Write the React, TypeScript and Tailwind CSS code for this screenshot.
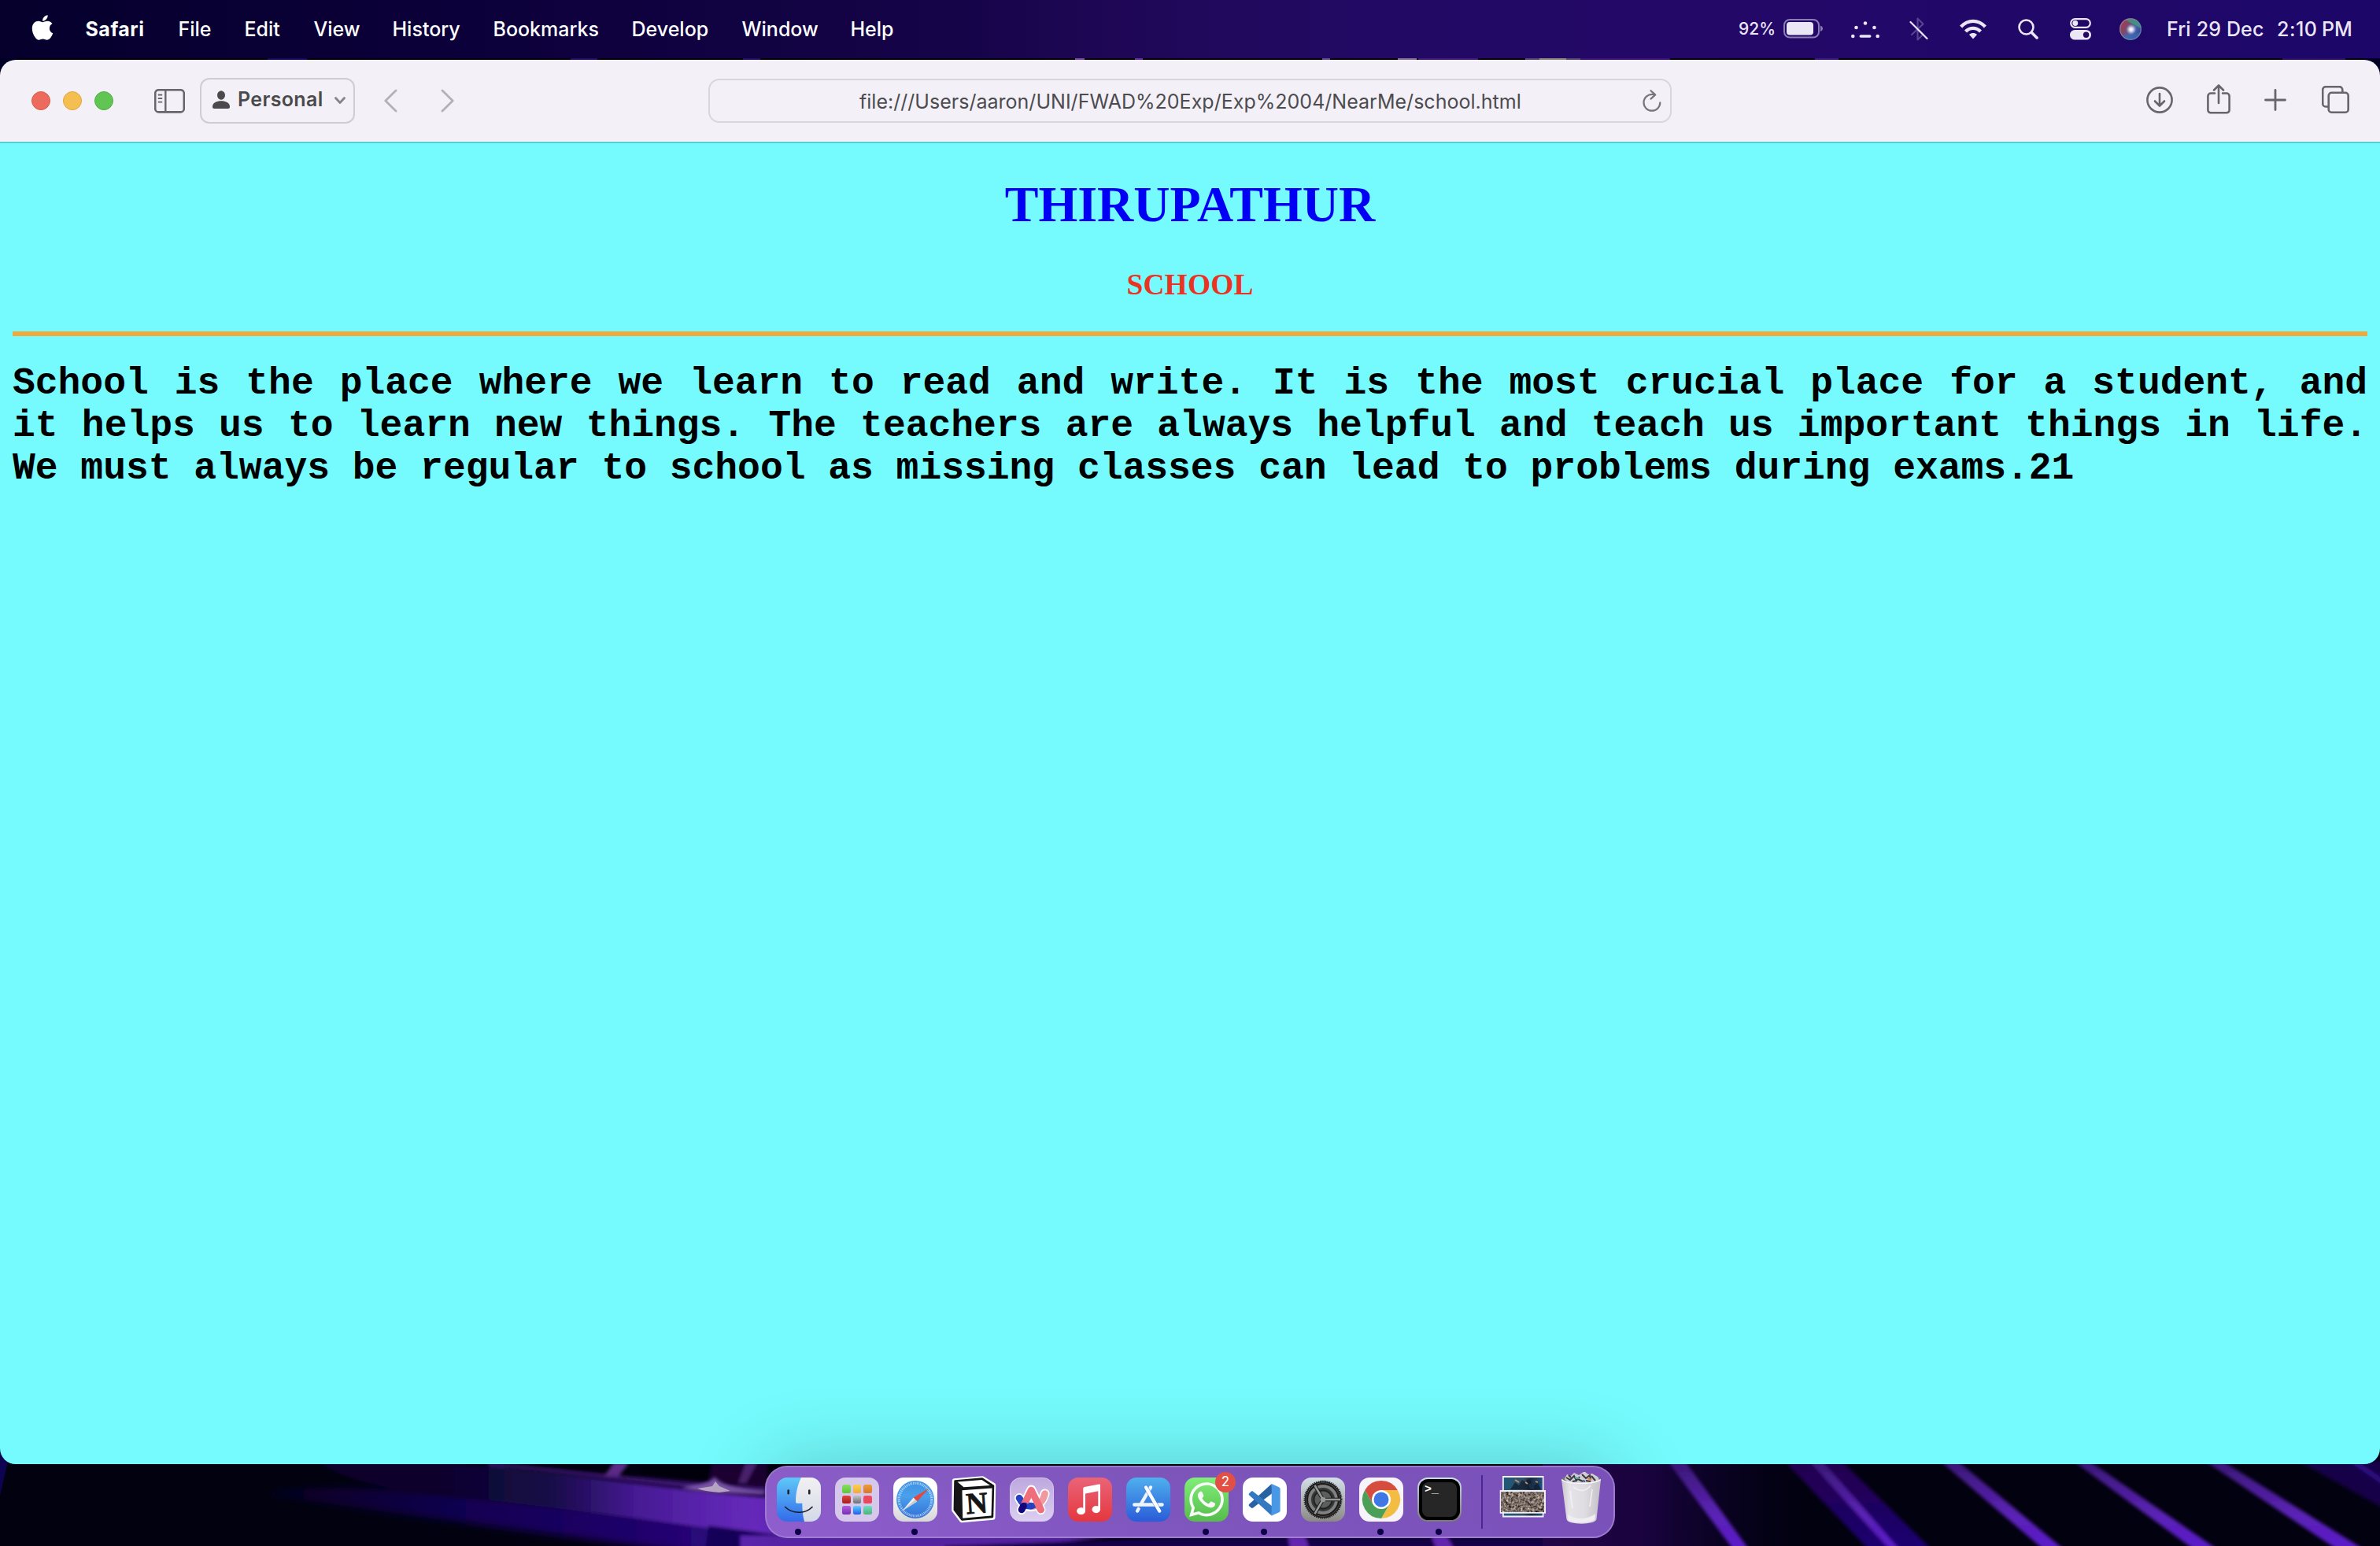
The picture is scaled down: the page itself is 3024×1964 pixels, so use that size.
import React from "react";
import { FaApple, FaWhatsapp } from "react-icons/fa";

function Wallpaper() {
  return (
    <svg className="absolute inset-0" width="3024" height="1964" viewBox="0 0 3024 1964">
      <defs>
        <linearGradient id="wBeam" x1="560" x2="960" y1="0" y2="0" gradientUnits="userSpaceOnUse">
          <stop offset="0" stopColor="#0a042c" />
          <stop offset="0.35" stopColor="#170a48" />
          <stop offset="0.62" stopColor="#451a92" />
          <stop offset="1" stopColor="#6b2cc4" />
        </linearGradient>
        <linearGradient id="wLow" x1="320" x2="980" y1="0" y2="0" gradientUnits="userSpaceOnUse">
          <stop offset="0" stopColor="#03001a" />
          <stop offset="0.4" stopColor="#110350" />
          <stop offset="0.8" stopColor="#220470" />
          <stop offset="1" stopColor="#3a0f8c" />
        </linearGradient>
        <linearGradient id="wStreak" x1="0" x2="0" y1="1860" y2="1964" gradientUnits="userSpaceOnUse">
          <stop offset="0" stopColor="#3b1878" />
          <stop offset="0.6" stopColor="#5a22b4" />
          <stop offset="1" stopColor="#5a1cc8" />
        </linearGradient>
        <linearGradient id="wBand" x1="0" x2="0" y1="1860" y2="1964" gradientUnits="userSpaceOnUse">
          <stop offset="0" stopColor="#23044e" />
          <stop offset="1" stopColor="#1c0370" />
        </linearGradient>
        <linearGradient id="wRight" x1="1960" x2="2300" y1="0" y2="0" gradientUnits="userSpaceOnUse">
          <stop offset="0" stopColor="#26064f" />
          <stop offset="0.4" stopColor="#1a043f" />
          <stop offset="1" stopColor="#03011f" stopOpacity="0" />
        </linearGradient>
        <filter id="wSoft" x="-10%" y="-10%" width="120%" height="120%">
          <feGaussianBlur stdDeviation="2.2" />
        </filter>
        <filter id="wWide" x="-20%" y="-20%" width="140%" height="140%">
          <feGaussianBlur stdDeviation="5" />
        </filter>
      </defs>
      <rect width="3024" height="1964" fill="#02010f" />
      <rect y="74" width="3024" height="30" fill="#000024" />
      <rect x="20" y="74" width="2984" height="2" fill="#030008" />
      <g opacity=".8">
        <rect x="340" y="74" width="50" height="2" fill="#1c0a70" />
        <rect x="725" y="74" width="34" height="2" fill="#2d1078" />
        <rect x="944" y="74" width="22" height="2" fill="#2d1078" />
        <rect x="1366" y="74" width="12" height="2" fill="#9a5cc0" />
        <rect x="1442" y="74" width="10" height="2" fill="#7a3cb8" />
        <rect x="1680" y="74" width="10" height="2" fill="#7a5cb0" />
        <rect x="1776" y="74" width="24" height="2" fill="#a58cb8" />
        <rect x="1802" y="74" width="76" height="2" fill="#55208c" />
        <rect x="1938" y="74" width="18" height="2" fill="#6a5890" />
        <rect x="1956" y="74" width="34" height="2" fill="#b0aa98" />
        <rect x="1990" y="74" width="18" height="2" fill="#6a5890" />
        <rect x="2008" y="74" width="114" height="2" fill="#4a168c" />
        <rect x="2306" y="74" width="30" height="2" fill="#4a1c98" />
        <rect x="2900" y="74" width="80" height="2" fill="#3a0f78" />
      </g>
      <path d="M0 1840h14L0 1900z" fill="#0d0350" />
      <g filter="url(#wSoft)">
        <path d="M340 1896C420 1880 600 1895 980 1945L1000 1975H900C700 1950 520 1925 340 1900z" fill="url(#wLow)" filter="url(#wWide)" />
        <path d="M400 1850C560 1850 760 1880 990 1904V1953C860 1936 720 1916 600 1904 500 1894 420 1880 400 1850z" fill="url(#wBeam)" />
        <path d="M620 1858C720 1866 850 1884 990 1890V1901C850 1894 720 1872 620 1862z" fill="#3b1270" />
        <path d="M640 1864C760 1876 850 1892 980 1902" stroke="#0c0228" strokeWidth="3" fill="none" />
        <path d="M780 1858h20L786 1875h-18z" fill="#5a2a86" />
        <path d="M812 1858H905L900 1882C870 1880 840 1876 812 1874z" fill="#04010f" />
        <path d="M905 1858H975V1890L900 1882z" fill="#1a0430" />
        <path d="M948 1858h14L948 1884h-10z" fill="#4c2470" />
        <path d="M900 1938L990 1950V1970H896z" fill="#14045a" />
      </g>
      <path d="M866 1890C885 1885 900 1886 908 1876 916 1886 930 1890 972 1894L970 1898C930 1896 900 1898 866 1890z" fill="#7a54a8" filter="url(#wSoft)" />
      <path d="M886 1891l19-3 4-6 5 6 14 6-14 2c-11-1-20-2-28-5z" fill="#b8a6c4" />
      <g filter="url(#wSoft)">
        <path d="M940 1950H1420L1260 1970H940z" fill="#5d27b0" />
        <path d="M1200 1964L1470 1954H2060V1970H1200z" fill="#150450" />
        <path d="M1636 1950h22l6 20h-24z" fill="#6c2cc0" />
        <path d="M1818 1950h20l10 20h-22z" fill="#6c2cc0" />
        <path d="M2003 1950h20l10 20h-22z" fill="#5522b0" />
      </g>
      <rect x="1960" y="1860" width="340" height="104" fill="url(#wRight)" />
      <g filter="url(#wSoft)">
        <path d="M2118 1855h22L2222 1968h-20z" fill="url(#wStreak)" />
        <path d="M2266 1855h73L2454 1968h-80z" fill="url(#wBand)" />
        <path d="M2298 1855h16L2413 1968h-12z" fill="url(#wStreak)" />
        <path d="M2464 1855h22L2622 1968h-26z" fill="url(#wStreak)" />
        <path d="M2633 1855h20L2817 1968h-30z" fill="url(#wStreak)" />
        <path d="M2800 1855h22L3003 1968h-34z" fill="url(#wStreak)" />
        <path d="M2918 1855h110V1916z" fill="#150446" />
        <path d="M2988 1855L3030 1884" stroke="#2f1080" strokeWidth="6" />
      </g>
    </svg>
  );
}

const menus: { label: string; cls: string }[] = [
  { label: "Safari", cls: "w-[118px] font-bold tracking-[0.5px]" },
  { label: "File", cls: "w-[84px]" },
  { label: "Edit", cls: "w-[88px]" },
  { label: "View", cls: "w-[100px]" },
  { label: "History", cls: "w-[128px]" },
  { label: "Bookmarks", cls: "w-[176px]" },
  { label: "Develop", cls: "w-[140px]" },
  { label: "Window", cls: "w-[138px]" },
  { label: "Help", cls: "w-[60px]" },
];

function MenuBar() {
  return (
    <header className="relative flex h-[74px] shrink-0 items-center bg-[linear-gradient(90deg,#05002c_0%,#0c003a_20%,#150448_40%,#1f0756_47%,#220a64_57%,#240868_72%,#1c0768_100%)] text-[25px] font-medium whitespace-nowrap text-white">
      <FaApple className="mt-[-5px] ml-[40px] h-[36px] w-[28px]" />
      <nav className="mt-px ml-[40.500px] flex">
        {menus.map((m) => (
          <span key={m.label} className={m.cls}>
            {m.label}
          </span>
        ))}
      </nav>
      <div className="mr-[-2px] ml-auto flex items-center text-[#ebe6f5]">
        <span className="w-[57px] text-[21px]">92%</span>
        <svg width="50" height="26" viewBox="0 0 50 26">
          <rect x="1" y="1" width="44" height="22.5" rx="7" fill="none" stroke="#8a7cb4" strokeWidth="2" />
          <rect x="4" y="4" width="34" height="16.5" rx="4" fill="#ebe6f5" />
          <path d="M47 8.500c4 1.500 4 6 0 7.500z" fill="#8a7cb4" />
        </svg>
        <svg className="ml-[36px]" width="36" height="28" viewBox="0 0 36 28" fill="#ebe6f5">
          <circle cx="18" cy="6.500" r="2.300" />
          <circle cx="6.500" cy="12" r="2.300" />
          <circle cx="29.500" cy="12" r="2.300" />
          <circle cx="2.300" cy="23" r="2.300" />
          <circle cx="33.700" cy="23" r="2.300" />
          <rect x="10.500" y="21.200" width="15" height="3.600" rx="1.800" />
        </svg>
        <svg className="ml-[38px]" width="24" height="30" viewBox="0 0 24 30" fill="none" strokeLinecap="round" strokeLinejoin="round">
          <path d="M3 22L17.500 8.500 10.500 1.500V28.500L17.500 21.500 11 15.500" stroke="#5a4690" strokeWidth="2" />
          <path d="M1.500 6L22.500 27" stroke="#ebe6f5" strokeWidth="2.200" />
        </svg>
        <svg className="ml-[40px]" width="34" height="26" viewBox="0 0 34 26" fill="none" stroke="#ebe6f5" strokeWidth="4.400">
          <path d="M1.600 10C10.500 .5 23.500 .5 32.400 10" />
          <path d="M7.500 16C13 10.500 21 10.500 26.500 16" />
          <path d="M17 25.500l-5-5.500c3-2.600 7-2.600 10 0z" fill="#ebe6f5" stroke="none" />
        </svg>
        <svg className="ml-[40px]" width="26" height="26" viewBox="0 0 26 26" fill="none" stroke="#ebe6f5" strokeLinecap="round">
          <circle cx="10.500" cy="10.500" r="9" strokeWidth="2.600" />
          <path d="M17.300 17.300L24 24" strokeWidth="3.600" />
        </svg>
        <svg className="ml-[40px]" width="27" height="28" viewBox="0 0 27 28">
          <rect x="1.200" y="1.200" width="24.600" height="10.600" rx="5.300" fill="none" stroke="#ebe6f5" strokeWidth="2.200" />
          <circle cx="6.800" cy="6.500" r="3.400" fill="#ebe6f5" />
          <rect y="15" width="27" height="12.600" rx="6.300" fill="#ebe6f5" />
          <circle cx="20.600" cy="21.300" r="3.700" fill="#24085f" />
        </svg>
        <svg className="ml-[36px]" width="28" height="28" viewBox="0 0 28 28">
          <defs>
            <radialGradient id="siriCore" cx="0.54" cy="0.52" r="0.34">
              <stop offset="0" stopColor="#fff" />
              <stop offset="0.35" stopColor="#f0ecf8" stopOpacity=".9" />
              <stop offset="1" stopColor="#b8b0e0" stopOpacity="0" />
            </radialGradient>
            <linearGradient id="siriBase" x1="0" y1="0.2" x2="1" y2="0.8">
              <stop offset="0" stopColor="#b83450" />
              <stop offset="0.35" stopColor="#7a4a6c" />
              <stop offset="0.6" stopColor="#4a6aa8" />
              <stop offset="1" stopColor="#263c90" />
            </linearGradient>
          </defs>
          <circle cx="14" cy="14" r="14" fill="url(#siriBase)" />
          <path d="M8 2C16-1 26 4 27 13 22 9 16 8 8 2z" fill="#3d9a7c" opacity=".85" />
          <path d="M4 21c6 1 13 0 22-3-2 6-7 9-12 9-4 0-8-2-10-6z" fill="#3a68b8" opacity=".7" />
          <circle cx="14" cy="14" r="13.200" fill="none" stroke="#7890a4" strokeWidth="1.200" opacity=".8" />
          <circle cx="14" cy="14" r="10" fill="url(#siriCore)" />
        </svg>
        <span className="mt-px ml-[32px] w-[140px] tracking-[0.150px]">Fri 29 Dec</span>
        <span className="mt-px w-[57px] tracking-[0.500px]">2:10</span>
        <span className="mt-px w-[76px]">PM</span>
      </div>
    </header>
  );
}

function Toolbar() {
  return (
    <div className="grid h-[104px] shrink-0 grid-cols-[900px_1224px_1fr] items-center bg-[#f3f1f7]">
      <div className="flex items-center pl-[40px]">
        <div className="flex gap-4">
          <span className="size-6 rounded-full border border-[#d85a4e] bg-[#ec6a5e]" />
          <span className="size-6 rounded-full border border-[#dfa53c] bg-[#f4bf50]" />
          <span className="size-6 rounded-full border border-[#51ad41] bg-[#61c554]" />
        </div>
        <svg className="ml-[52px]" width="39" height="31" viewBox="0 0 39 31" fill="none" stroke="#68666b">
          <rect x="1.200" y="1.200" width="36.600" height="28.200" rx="4.500" strokeWidth="2.600" />
          <path d="M14.300 1v29" strokeWidth="2.400" />
          <path d="M4.800 7.500h5.400M4.800 12h5.400M4.800 16.700h5.400" strokeWidth="1.800" />
        </svg>
        <div className="ml-[19px] flex h-[58px] w-[197px] items-center rounded-[12px] border-2 border-[#cecdd1] pl-[14px] text-[25px] font-semibold text-[#4a494c]">
          <svg className="mt-[-2px]" width="22" height="24" viewBox="0 0 22 24" fill="#4a494c">
            <ellipse cx="11" cy="6" rx="5" ry="5.700" />
            <path d="M0 20.500C0 10.800 22 10.800 22 20.500c0 1.800-.8 2.500-2.300 2.500H2.300C.8 23 0 22.300 0 20.500z" />
          </svg>
          <span className="mt-[-2px] ml-[10px] tracking-[0.350px]">Personal</span>
          <svg className="ml-[14px]" width="14" height="10" viewBox="0 0 14 10" fill="none" stroke="#858488" strokeWidth="2.800" strokeLinecap="round" strokeLinejoin="round">
            <path d="M1.500 1.500L7 7.500l5.500-6" />
          </svg>
        </div>
        <svg className="mt-[-1px] ml-[37px]" width="17" height="30" viewBox="0 0 17 30" fill="none" stroke="#b3b1b7" strokeWidth="2.800" strokeLinecap="round" strokeLinejoin="round">
          <path d="M15 2L1.800 15 15 28" />
        </svg>
        <svg className="mt-[-1px] ml-[55px]" width="17" height="30" viewBox="0 0 17 30" fill="none" stroke="#b3b1b7" strokeWidth="2.800" strokeLinecap="round" strokeLinejoin="round">
          <path d="M2 2l13.200 13L2 28" />
        </svg>
      </div>
      <div className="flex h-[56px] items-center rounded-[14px] border-2 border-[#d8d6dc] text-[25px] text-[#4c4b4f]">
        <span className="mt-[4px] ml-[190px] w-[995px] whitespace-nowrap tracking-[0.020px]">file:///Users/aaron/UNI/FWAD%20Exp/Exp%2004/NearMe/school.html</span>
        <svg width="24" height="28" viewBox="0 0 24 28" fill="none" stroke="#77757a" strokeWidth="2.200" strokeLinecap="round" strokeLinejoin="round">
          <path d="M14.500 6.200C7 4.800 1.500 10 1.500 16.300a10.400 10.400 0 0 0 20.800 0" />
          <path d="M10.500 1.200l5.700 5.200-5.700 5.200" />
        </svg>
      </div>
      <div className="flex items-center justify-end pr-[39px] text-[#68666b]">
        <svg className="mt-[-2px]" width="34" height="34" viewBox="0 0 34 34" fill="none" stroke="currentColor" strokeWidth="2.600" strokeLinecap="round" strokeLinejoin="round">
          <circle cx="17" cy="17" r="15.600" />
          <path d="M17 9v15M11 18.500l6 6 6-6" />
        </svg>
        <svg className="mt-[-5px] ml-[43px]" width="30" height="38" viewBox="0 0 30 38" fill="none" stroke="currentColor" strokeWidth="2.600" strokeLinecap="round" strokeLinejoin="round">
          <path d="M10 11.500H5a3.600 3.600 0 0 0-3.600 3.600v17.600A3.600 3.600 0 0 0 5 36.300h20a3.600 3.600 0 0 0 3.600-3.600V15.100a3.600 3.600 0 0 0-3.600-3.600h-5" />
          <path d="M15 24V1.800M9 7.500l6-6 6 6" />
        </svg>
        <svg className="mt-[-3px] ml-[43px]" width="28" height="28" viewBox="0 0 28 28" fill="none" stroke="currentColor" strokeWidth="2.800" strokeLinecap="round">
          <path d="M14 1.500v25M1.500 14h25" />
        </svg>
        <svg className="mt-[-3px] ml-[45px]" width="35" height="35" viewBox="0 0 35 35" fill="none" stroke="currentColor" strokeWidth="2.600" strokeLinejoin="round">
          <path d="M8.500 26.500H5a3.800 3.800 0 0 1-3.800-3.800V5A3.800 3.800 0 0 1 5 1.200h17.500A3.800 3.800 0 0 1 26.300 5v3.500" />
          <rect x="8.700" y="8.700" width="25" height="25" rx="3.800" />
        </svg>
      </div>
    </div>
  );
}

function Page() {
  return (
    <main className="flex-1 border-t-2 border-[#55cfd2] bg-[#75fbfd] px-4">
      <h1 className="mt-[41px] text-center font-['Liberation_Serif',serif] text-[64px] leading-[74px] font-bold text-[#0000f5]">THIRUPATHUR</h1>
      <h3 className="mt-[44px] text-center font-['Liberation_Serif',serif] text-[37.440px] leading-[42px] font-bold tracking-[0.150px] text-[#ea3323]">SCHOOL</h3>
      <hr className="mt-[38px] h-[6px] border-0 bg-[#f2a93b]" />
      <p className="mt-[33px] text-justify font-['Liberation_Mono',monospace] text-[48px] leading-[54px] font-bold tracking-[-0.020px] text-black">
        School is the place where we learn to read and write. It is the most crucial place for a student, and it helps us to learn new things. The teachers are always helpful and teach us important things in life. We must always be regular to school as missing classes can lead to problems during exams.21
      </p>
    </main>
  );
}

function Finder() {
  return (
    <svg width="56" height="56" viewBox="0 0 56 56">
      <defs>
        <linearGradient id="fBlue" x1="0" y1="0" x2="0" y2="1"><stop offset="0" stopColor="#5fc8f8" /><stop offset="1" stopColor="#336bea" /></linearGradient>
        <linearGradient id="fWhite" x1="0" y1="0" x2="0" y2="1"><stop offset="0" stopColor="#f2f1f3" /><stop offset="1" stopColor="#d2d9e6" /></linearGradient>
        <clipPath id="fClip"><rect width="56" height="56" rx="13" /></clipPath>
      </defs>
      <g clipPath="url(#fClip)">
        <rect width="56" height="56" fill="url(#fBlue)" />
        <path d="M31 0C26.500 9 24 20 24 30.500c0 1.600.8 2.300 2.300 2.300h6C32.300 41 33 49 35 56H56V0z" fill="url(#fWhite)" />
        <path d="M14.700 16.500v3.700M41.300 16.500v3.700" stroke="#1d2430" strokeWidth="2.600" strokeLinecap="round" />
        <path d="M10.700 37.500C20 46.500 36 46.500 45 37.500" fill="none" stroke="#161c28" strokeWidth="1.700" strokeLinecap="round" />
      </g>
    </svg>
  );
}

const pads = ["from-[#86e05e] to-[#5cc63c]", "from-[#f8d24a] to-[#f0a83a]", "from-[#ee9a3a] to-[#d8782e]", "from-[#e0443c] to-[#a81e1c]", "from-[#c0c4c8] to-[#6c7074]", "from-[#ee4a64] to-[#e8485a]", "from-[#b45ce0] to-[#7630b0]", "from-[#5cd0f8] to-[#2c58ea]", "from-[#70dcc0] to-[#4cb47c]"];

function Launchpad() {
  return (
    <div className="grid size-14 grid-cols-3 place-content-center gap-[3px] rounded-[13px] bg-[#d5c8ea] px-[9px]">
      {pads.map((p) => (
        <span key={p} className={`h-[10.700px] rounded-[2.500px] bg-linear-to-b ${p}`} />
      ))}
    </div>
  );
}

function SafariIcon() {
  return (
    <svg width="56" height="56" viewBox="0 0 56 56">
      <defs>
        <linearGradient id="sBg" x1="0" y1="0" x2="0" y2="1"><stop offset="0.3" stopColor="#fff" /><stop offset="1" stopColor="#d6d6d6" /></linearGradient>
        <linearGradient id="sBlue" x1="0" y1="0" x2="0" y2="1"><stop offset="0" stopColor="#3b8fe2" /><stop offset="0.4" stopColor="#4ba0ec" /><stop offset="1" stopColor="#3270d8" /></linearGradient>
      </defs>
      <rect width="56" height="56" rx="13" fill="url(#sBg)" />
      <circle cx="28" cy="28" r="24" fill="url(#sBlue)" />
      <circle cx="28" cy="28" r="20.800" fill="none" stroke="#d4e6fa" strokeWidth="3.200" strokeDasharray="0.700 1.115" />
      <path d="M45.300 13.700L30.200 30.600 25.600 25.400z" fill="#e4483c" />
      <path d="M11.200 42.600L25.600 25.400 30.200 30.600z" fill="#eef0f2" />
      <path d="M11.200 42.600L27.900 28 30.200 30.600z" fill="#c8ccd2" />
    </svg>
  );
}

function Notion() {
  return (
    <svg className="overflow-visible" width="56" height="56" viewBox="0 0 56 56">
      <path d="M3.500 4L39.500 1 53.500 9.500 52.800 51 13 54.600 3 41.500z" fill="#fff" stroke="#fff" strokeWidth="5.500" strokeLinejoin="round" />
      <path d="M4.500 4.500L39 1.500 53 10.500 52 50 13.300 53.500 3.800 41z" fill="#151515" stroke="#151515" strokeWidth="2.500" strokeLinejoin="round" />
      <path d="M7.500 5.500L38.500 3 49 10 15.500 12.300z" fill="#fff" />
      <path d="M13.500 16.200L51.500 13.400 50.500 48.600 14.200 51.800z" fill="#fff" />
      <text x="32" y="45.300" textAnchor="middle" fontSize="38" fontWeight="700" fontFamily="Liberation Serif, serif" fill="#151515" stroke="#151515" strokeWidth="0.800" transform="rotate(-4 32 33)">N</text>
    </svg>
  );
}

function Arc() {
  return (
    <svg width="56" height="56" viewBox="0 0 56 56" fill="none" strokeLinecap="round" strokeLinejoin="round">
      <defs>
        <linearGradient id="aBg" x1="0" y1="0" x2="0" y2="1"><stop offset="0" stopColor="#bda8de" /><stop offset="1" stopColor="#dccff0" /></linearGradient>
      </defs>
      <rect x="0.500" y="0.500" width="55" height="55" rx="13" fill="url(#aBg)" stroke="#d6c8ee" />
      <path d="M15 41L27.300 15.500 39.500 41M12 26C15.500 33 21 37 27 37 36 36 42 30 44.600 20.500" stroke="#fff" strokeWidth="12" />
      <path d="M44.600 20.500C43 29 37 36 27.500 37" stroke="#f09aa0" strokeWidth="8.600" />
      <path d="M12 26C15.500 33 21 37 27.500 36" stroke="#2341c4" strokeWidth="8.600" />
      <path d="M18 35L27.300 16 39.500 41" stroke="#ef6e7c" strokeWidth="8.600" />
      <path d="M18 33.500c4.500 4.500 12 5 17-.5" stroke="#2341c4" strokeWidth="6" strokeLinecap="butt" />
      <path d="M15 41l2.500-5" stroke="#15057c" strokeWidth="8.600" />
      <path d="M34 30l5.500 11" stroke="#ef6e7c" strokeWidth="8.600" />
    </svg>
  );
}

function Music() {
  return (
    <svg width="56" height="56" viewBox="0 0 56 56">
      <defs>
        <linearGradient id="mBg" x1="0" y1="0" x2="0" y2="1"><stop offset="0" stopColor="#ea6478" /><stop offset="1" stopColor="#e4373e" /></linearGradient>
      </defs>
      <rect width="56" height="56" rx="13" fill="url(#mBg)" />
      <path d="M19.300 14.200c0-1.300.5-1.900 1.700-2.200l18.500-3.400c1-.2 1.500.3 1.500 1.300V40a5.300 4.600 0 1 1-2.700-3.500V17.300L22 20.500V42a5.500 4.500 0 1 1-2.700-3.300z" fill="#fff" />
    </svg>
  );
}

function AppStore() {
  return (
    <svg width="56" height="56" viewBox="0 0 56 56" fill="none" strokeLinecap="round">
      <defs>
        <linearGradient id="asBg" x1="0" y1="0" x2="0" y2="1"><stop offset="0" stopColor="#4fb0ee" /><stop offset="1" stopColor="#2a5cd8" /></linearGradient>
      </defs>
      <rect width="56" height="56" rx="13" fill="url(#asBg)" />
      <g stroke="#eef4fc" strokeWidth="4.400">
        <path d="M10.300 34.500h35.200" />
        <path d="M31 12.500L18.500 34M15.600 39.800l-1.500 2.700" />
      </g>
      <path d="M25 12.500L42.200 42.500" stroke="#2f6cd8" strokeWidth="5.600" opacity=".5" />
      <path d="M25 12.500L42.200 42.500" stroke="#fafcff" strokeWidth="4.400" />
    </svg>
  );
}

function WhatsApp() {
  return (
    <div className="relative flex size-14 items-center justify-center rounded-[13px] bg-linear-to-b from-[#80ee78] to-[#56bc4c]">
      <FaWhatsapp className="size-[50px] text-[#f8faf8]" />
      <span className="absolute top-[-7px] left-[39px] flex size-[26px] items-center justify-center rounded-full bg-[#e25045] text-[17px] text-white">2</span>
    </div>
  );
}

function VSCode() {
  return (
    <svg width="56" height="56" viewBox="0 0 56 56">
      <rect width="56" height="56" rx="13" fill="#fff" />
      <path d="M36.700 8L8.300 33.800c-.8.800-.8 1.700 0 2.500l2.500 2.300c.8.600 1.500.6 2.300 0L37.500 20z" fill="#2862a2" />
      <path d="M36.700 48.500L8.300 22.600c-.8-.8-.8-1.700 0-2.500l2.500-2.300c.8-.6 1.500-.6 2.300 0L37.500 36.500z" fill="#3478c2" />
      <path d="M36.700 48.500V8l9.300 4.200c1 .5 1.600 1.300 1.600 2.300V42c0 1-.6 1.900-1.600 2.300z" fill="#4898e6" />
    </svg>
  );
}

function Settings() {
  return (
    <svg width="56" height="56" viewBox="0 0 56 56" fill="none">
      <defs>
        <linearGradient id="gBg" x1="0" y1="0" x2="0" y2="1"><stop offset="0" stopColor="#d3e0e8" /><stop offset="1" stopColor="#8b8985" /></linearGradient>
      </defs>
      <rect width="56" height="56" rx="13" fill="url(#gBg)" />
      <circle cx="28" cy="28" r="22.500" fill="#727474" stroke="#222" strokeWidth="1.600" />
      <circle cx="28" cy="28" r="23" stroke="#202020" strokeWidth="3" strokeDasharray="1.200 1.208" />
      <circle cx="28" cy="28" r="20" stroke="#1d1d1d" strokeWidth="2.400" />
      <circle cx="28" cy="28" r="17" stroke="#808281" strokeWidth="3.200" />
      <circle cx="28" cy="28" r="15" fill="#363838" />
      <circle cx="28" cy="28" r="11.500" fill="#5c5e5e" stroke="#1f2020" strokeWidth="1.800" />
      <path d="M28 28h23M28 28L16.500 8M28 28L16.500 48" stroke="#1e1e1e" strokeWidth="4.600" />
      <path d="M28 28h22M28 28L17.500 9.800M28 28L17.500 46.200" stroke="#96989a" strokeWidth="2.600" />
      <circle cx="28" cy="28" r="3.200" fill="#96989a" />
    </svg>
  );
}

function Chrome() {
  return (
    <svg width="56" height="56" viewBox="0 0 56 56">
      <rect width="56" height="56" rx="13" fill="#f6f3fb" />
      <path d="M7.200 16A24 24 0 0 1 48.800 16H28L17.600 34z" fill="#d64c3e" />
      <path d="M48.800 16A24 24 0 0 1 28 52L38.400 34 28 16z" fill="#f3bd44" />
      <path d="M28 52A24 24 0 0 1 7.200 16L17.600 34H38.400z" fill="#4c9f56" />
      <circle cx="28" cy="28" r="12" fill="#fff" />
      <circle cx="28" cy="28" r="9.500" fill="#3f78e4" />
    </svg>
  );
}

function Terminal() {
  return (
    <svg width="56" height="56" viewBox="0 0 56 56">
      <defs>
        <linearGradient id="tBg" x1="0" y1="0" x2="0" y2="1"><stop offset="0" stopColor="#c9dfe8" /><stop offset="1" stopColor="#7a7878" /></linearGradient>
      </defs>
      <rect width="56" height="56" rx="13" fill="url(#tBg)" />
      <rect x="2" y="2" width="52" height="52" rx="11.500" fill="#000" />
      <rect x="6" y="6" width="44" height="44" rx="8" fill="#262626" />
      <text x="9" y="19" fontSize="15" fontWeight="700" fontFamily="Liberation Mono, monospace" fill="#fff">&gt;_</text>
    </svg>
  );
}

function Minimised() {
  return (
    <svg width="60" height="56" viewBox="0 0 60 56">
      <defs>
        <filter id="pGrain" x="0" y="0" width="100%" height="100%" colorInterpolationFilters="sRGB">
          <feTurbulence type="fractalNoise" baseFrequency="0.33" numOctaves="3" seed="4" />
          <feColorMatrix values="0.9 0.7 0 0 -0.32  0.9 0.6 0 0 -0.32  0.9 0.5 0.1 0 -0.35  0 0 0 0 1" />
        </filter>
        <linearGradient id="pDark" x1="0" x2="1" y1="0" y2="0"><stop offset="0" stopColor="#1d5a78" /><stop offset="0.5" stopColor="#345066" /><stop offset="0.7" stopColor="#1a2a40" /><stop offset="1" stopColor="#22507a" /></linearGradient>
      </defs>
      <rect x="4" y="1" width="52.500" height="52.500" fill="#f2eff6" />
      <rect x="5.800" y="3" width="49" height="48.500" fill="url(#pDark)" />
      <path d="M14 18l6-9 5 4 4-7 8 5 2 7zM34 6l5-1 2 5-5 2zM44 13l5-3 4 8h-9z" fill="#0e1a2c" opacity=".7" />
      <path d="M20 6l5 3M33 9l3 2M46 8l3 1" stroke="#c8906c" strokeWidth="1.800" />
      <rect x="0.700" y="19" width="58.300" height="29.700" fill="#f2eff6" />
      <rect x="2.700" y="21" width="54.300" height="25.700" fill="#7a6c66" filter="url(#pGrain)" />
    </svg>
  );
}

function Trash() {
  return (
    <svg width="52" height="68" viewBox="0 0 52 68">
      <defs>
        <linearGradient id="binBody" x1="0" x2="1" y1="0" y2="0"><stop offset="0" stopColor="#c9c6cc" /><stop offset="0.2" stopColor="#e6e4e8" /><stop offset="0.6" stopColor="#dedce0" /><stop offset="1" stopColor="#c4c0c8" /></linearGradient>
      </defs>
      <ellipse cx="26" cy="9" rx="24.500" ry="5.500" fill="#77757c" />
      <path d="M5 9l3-6 5 2 4-4 6 3 3-2 4-3 5 4 5-1 7 4 2 4-6 5H11z" fill="#cfcdd3" />
      <path d="M7 7l5 3 5-5 3 6 4-5M27 3l5 5 5-4 1 6M39 5l5 6M22 9l6 3M10 4l3 3M32 11l6 1M15 12l5-1" stroke="#3a383e" strokeWidth="2" fill="none" />
      <path d="M18 7l5 1" stroke="#44b8a8" strokeWidth="2" />
      <path d="M34 8l5 2" stroke="#e08a3c" strokeWidth="2" />
      <path d="M28 11l3 1" stroke="#3450a8" strokeWidth="2" />
      <path d="M1 9.500C8 16 44 16 51 9.500L45.500 60C44.500 67.500 8.500 67.500 7.500 60z" fill="url(#binBody)" />
      <path d="M1.200 9.500C8 16 44 16 50.800 9.500" fill="none" stroke="#fafafa" strokeWidth="1.400" />
      <path d="M9 54C18 61 34 61 44 53L43.500 60C42 65.500 11 65.500 9.500 60z" fill="#f0eef2" />
      <path d="M16 19c8 6 16 6 22-2M12 24l3 22M40 22l-3 22" stroke="#f4f2f6" strokeWidth="1.800" fill="none" opacity=".8" />
    </svg>
  );
}

const apps: { name: string; Icon: () => React.ReactElement; open: boolean }[] = [
  { name: "finder", Icon: Finder, open: true },
  { name: "launchpad", Icon: Launchpad, open: false },
  { name: "safari", Icon: SafariIcon, open: true },
  { name: "notion", Icon: Notion, open: false },
  { name: "arc", Icon: Arc, open: false },
  { name: "music", Icon: Music, open: false },
  { name: "appstore", Icon: AppStore, open: false },
  { name: "whatsapp", Icon: WhatsApp, open: true },
  { name: "vscode", Icon: VSCode, open: true },
  { name: "settings", Icon: Settings, open: false },
  { name: "chrome", Icon: Chrome, open: true },
  { name: "terminal", Icon: Terminal, open: true },
];

function Dock() {
  return (
    <footer className="relative mx-auto mt-[2px] flex h-[92px] w-[1080px] shrink-0 rounded-[28px] border-2 border-white/20 bg-[linear-gradient(180deg,#7f59ba_0%,#8a5cc8_100%)] bg-origin-border pl-[13px] shadow-[0_0_100px_rgba(0,0,0,0.22)]">
      <div className="absolute inset-0 rounded-[26px] bg-[linear-gradient(90deg,rgba(150,96,212,0.5)_0%,rgba(122,82,186,0.6)_45%,rgba(120,80,184,0.9)_100%)]" />
      <div className="relative flex gap-[18px] pt-[13px]">
        {apps.map(({ name, Icon, open }) => (
          <div key={name} className="flex w-14 flex-col items-center">
            <Icon />
            {open && <span className="mt-[9px] mr-[2px] size-2 rounded-full bg-[#0e0048]" />}
          </div>
        ))}
      </div>
      <span className="relative mt-[10px] ml-[25px] h-[68px] w-[2px] bg-[#4b2795]" />
      <div className="relative mt-[10px] ml-[21px]">
        <Minimised />
      </div>
      <div className="relative mt-[6px] ml-[18px]">
        <Trash />
      </div>
    </footer>
  );
}

export default function App() {
  return (
    <div className="relative flex h-[1964px] w-[3024px] flex-col overflow-hidden font-['Inter',sans-serif]">
      <Wallpaper />
      <MenuBar />
      <section className="relative mt-[2px] flex h-[1784px] shrink-0 flex-col overflow-hidden rounded-[20px]">
        <Toolbar />
        <Page />
      </section>
      <Dock />
    </div>
  );
}
